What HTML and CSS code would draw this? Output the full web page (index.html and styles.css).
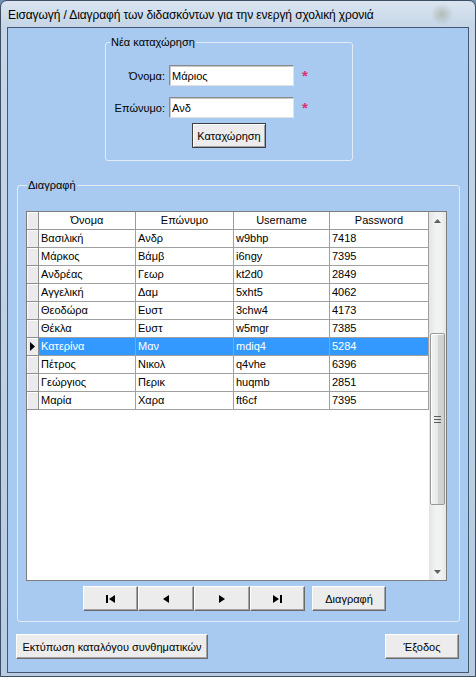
FILE: index.html
```html
<!DOCTYPE html>
<html lang="el">
<head>
    <meta charset="UTF-8">
    <title>Εισαγωγή / Διαγραφή διδασκόντων</title>
    <link rel="stylesheet" href="styles.css">
</head>
<body>
    <div class="window">
        <div class="titlebar">Εισαγωγή / Διαγραφή των διδασκόντων για την ενεργή σχολική χρονιά</div>
        <div class="client">
            <!-- νέα καταχώρηση -->
            <fieldset class="group group-new">
                <legend>Νέα καταχώρηση</legend>
                <div class="form-row">
                    <label class="form-label">Όνομα:</label>
                    <input class="field" type="text" value="Μάριος">
                    <span class="req">*</span>
                </div>
                <div class="form-row">
                    <label class="form-label">Επώνυμο:</label>
                    <input class="field" type="text" value="Ανδ">
                    <span class="req">*</span>
                </div>
                <div class="submit-row">
                    <button class="btn btn-default btn-submit">Καταχώρηση</button>
                </div>
            </fieldset>

            <!-- διαγραφή -->
            <fieldset class="group group-delete">
                <legend>Διαγραφή</legend>
                <div class="grid">
                    <div class="table">
                        <div class="row head">
                            <div class="cell rh"></div>
                            <div class="cell">Όνομα</div>
                            <div class="cell">Επώνυμο</div>
                            <div class="cell">Username</div>
                            <div class="cell">Password</div>
                        </div>
                        <div class="row"><div class="cell rh"></div><div class="cell">Βασιλική</div><div class="cell">Ανδρ</div><div class="cell">w9bhp</div><div class="cell">7418</div></div>
                        <div class="row"><div class="cell rh"></div><div class="cell">Μάρκος</div><div class="cell">Βάμβ</div><div class="cell">i6ngy</div><div class="cell">7395</div></div>
                        <div class="row"><div class="cell rh"></div><div class="cell">Ανδρέας</div><div class="cell">Γεωρ</div><div class="cell">kt2d0</div><div class="cell">2849</div></div>
                        <div class="row"><div class="cell rh"></div><div class="cell">Αγγελική</div><div class="cell">Δαμ</div><div class="cell">5xht5</div><div class="cell">4062</div></div>
                        <div class="row"><div class="cell rh"></div><div class="cell">Θεοδώρα</div><div class="cell">Ευστ</div><div class="cell">3chw4</div><div class="cell">4173</div></div>
                        <div class="row"><div class="cell rh"></div><div class="cell">Θέκλα</div><div class="cell">Ευστ</div><div class="cell">w5mgr</div><div class="cell">7385</div></div>
                        <div class="row selected">
                            <div class="cell rh">
                                <svg width="5" height="9" viewBox="0 0 5 9"><polygon points="0,0 5,4.5 0,9" fill="#000"/></svg>
                            </div>
                            <div class="cell">Κατερίνα</div><div class="cell">Μαν</div><div class="cell">mdiq4</div><div class="cell">5284</div>
                        </div>
                        <div class="row"><div class="cell rh"></div><div class="cell">Πέτρος</div><div class="cell">Νικολ</div><div class="cell">q4vhe</div><div class="cell">6396</div></div>
                        <div class="row"><div class="cell rh"></div><div class="cell">Γεώργιος</div><div class="cell">Περικ</div><div class="cell">huqmb</div><div class="cell">2851</div></div>
                        <div class="row"><div class="cell rh"></div><div class="cell">Μαρία</div><div class="cell">Χαρα</div><div class="cell">ft6cf</div><div class="cell">7395</div></div>
                    </div>
                    <div class="vscroll">
                        <div class="sb-arrow">
                            <svg width="7" height="4" viewBox="0 0 7 4"><polygon points="0,4 3.5,0 7,4" fill="#606060"/></svg>
                        </div>
                        <div class="sb-gap"></div>
                        <div class="sb-thumb">
                            <svg width="7" height="7" viewBox="0 0 7 7">
                                <rect x="0" y="0" width="7" height="1" fill="#5a5a5a"/>
                                <rect x="0" y="3" width="7" height="1" fill="#5a5a5a"/>
                                <rect x="0" y="6" width="7" height="1" fill="#5a5a5a"/>
                            </svg>
                        </div>
                        <div class="sb-rest"></div>
                        <div class="sb-arrow">
                            <svg width="7" height="4" viewBox="0 0 7 4"><polygon points="0,0 7,0 3.5,4" fill="#606060"/></svg>
                        </div>
                    </div>
                </div>
                <div class="nav">
                    <button class="btn nav-btn">
                        <svg width="9" height="8" viewBox="0 0 9 8"><rect x="0" y="0" width="2" height="8"/><polygon points="9,0 9,8 3,4"/></svg>
                    </button>
                    <button class="btn nav-btn nav-wide">
                        <svg width="6" height="8" viewBox="0 0 6 8"><polygon points="6,0 6,8 0,4"/></svg>
                    </button>
                    <button class="btn nav-btn nav-wide">
                        <svg width="6" height="8" viewBox="0 0 6 8"><polygon points="0,0 0,8 6,4"/></svg>
                    </button>
                    <button class="btn nav-btn">
                        <svg width="9" height="8" viewBox="0 0 9 8"><polygon points="0,0 0,8 6,4"/><rect x="7" y="0" width="2" height="8"/></svg>
                    </button>
                    <button class="btn btn-delete">Διαγραφή</button>
                </div>
            </fieldset>

            <div class="footer">
                <button class="btn btn-print">Εκτύπωση καταλόγου συνθηματικών</button>
                <button class="btn btn-exit">Έξοδος</button>
            </div>
        </div>
    </div>
</body>
</html>
```

FILE: styles.css
```css
/* βασικά */
body {
    margin: 0;
    font-family: "Liberation Sans", Arial, sans-serif;
    font-size: 11px;
    color: #000;
    background: #6f8fb3;
}

/* παράθυρο */
.window {
    width: 476px;
    height: 677px;
    box-sizing: border-box;
    padding: 0 6px 3px;
    display: flex;
    flex-direction: column;
    border: 1px solid #3d4e63;
    border-radius: 7px 7px 0 0;
    background:
        radial-gradient(circle at 441px 13px, rgba(110, 112, 70, 0.3), rgba(110, 112, 70, 0) 11px),
        linear-gradient(#dbe5f0, #c6d6e7 24px, #b7cbe1);
}

.titlebar {
    height: 24px;
    padding: 2px 0 0 1px;
    display: flex;
    align-items: center;
    font-size: 12px;
    letter-spacing: -0.1px;
    white-space: nowrap;
}

.client {
    flex: 1;
    background: #a9caf0;
    border: 1px solid #43576f;
}

/* group box */
.group {
    box-sizing: border-box;
    margin: 0;
    border: 1px solid #e3ebf5;
    border-radius: 3px;
    min-width: 0;
}

.group legend {
    line-height: 13px;
    padding: 0 1px;
}

.group-new {
    width: 248px;
    margin: 8px 0 0 97px;
    padding: 16px 0 12px;
}

.group-new legend {
    margin-left: 4px;
}

.form-row {
    display: flex;
    align-items: center;
    height: 21px;
}

.form-row + .form-row {
    margin-top: 11px;
}

.form-label {
    width: 59px;
    margin-right: 4px;
    text-align: right;
}

.field {
    box-sizing: border-box;
    width: 125px;
    height: 21px;
    margin: 0;
    padding: 0 0 0 2px;
    font: inherit;
    background: #fff;
    border: 1px solid;
    border-color: #8a8a8a #e2e2e2 #e2e2e2 #8a8a8a;
    box-shadow: inset 1px 1px 0 #c9c9c9;
    outline: none;
}

.req {
    margin: 0 0 0 8px;
    color: #e0306e;
    font-size: 15px;
    font-weight: bold;
    line-height: 15px;
}

.submit-row {
    margin-top: 5px;
    display: flex;
    justify-content: center;
}

/* κουμπιά */
.btn {
    box-sizing: border-box;
    height: 25px;
    margin: 0;
    padding: 0;
    font: inherit;
    color: #000;
    background: #ececec;
    border: 1px solid;
    border-color: #fff #6b6b6b #6b6b6b #fff;
    box-shadow: inset -1px -1px 0 #a3a3a3;
}

.btn-default {
    border: 1px solid #3f3f3f;
    box-shadow: inset 1px 1px 0 #fff, inset -1px -1px 0 #a3a3a3;
}

.btn-submit {
    width: 74px;
}

.group-delete {
    width: 443px;
    margin: 18px 0 0 9px;
    padding: 19px 0 10px 8px;
}

.group-delete legend {
    margin-left: 1px;
}

/* πίνακας */
.grid {
    box-sizing: border-box;
    width: 421px;
    height: 370px;
    display: flex;
    background: #fff;
    border: 1px solid #7c7c7c;
}

.table {
    flex: 1;
}

.row {
    display: grid;
    grid-template-columns: 12px 97px 98px 96px 99px;
    height: 18px;
}

.cell {
    box-sizing: border-box;
    padding-left: 2px;
    line-height: 17px;
    white-space: nowrap;
    overflow: hidden;
    border-right: 1px solid #a0a0a0;
    border-bottom: 1px solid #a0a0a0;
}

.head .cell {
    padding: 0;
    text-align: center;
    background: #fff;
    border-color: #9a9a9a;
}

.cell.rh {
    padding: 0;
    background: #ebebeb;
    border-color: #8e8e8e;
    box-shadow: inset 1px 1px 0 #fff;
    display: flex;
    align-items: center;
    justify-content: center;
}

.row.selected .cell:not(.rh) {
    background: #3399ff;
    color: #fff;
}

/* scrollbar */
.vscroll {
    width: 17px;
    display: flex;
    flex-direction: column;
    background: linear-gradient(90deg, #e4e4e4, #f2f2f2 40%, #f2f2f2 70%, #e6e6e6);
}

.sb-arrow {
    height: 17px;
    display: flex;
    align-items: center;
    justify-content: center;
}

.sb-gap {
    height: 104px;
}

.sb-thumb {
    box-sizing: border-box;
    height: 172px;
    margin: 0 1px;
    display: flex;
    align-items: center;
    justify-content: center;
    border: 1px solid #989898;
    border-radius: 2px;
    background: linear-gradient(90deg, #f4f4f4, #e8e8e8 50%, #d4d4d4 51%, #cfcfcf);
    box-shadow: inset 1px 1px 0 #fff;
}

.sb-rest {
    flex: 1;
}

/* πλοήγηση */
.nav {
    display: flex;
    margin-top: 5px;
    padding-left: 57px;
}

.nav-btn {
    width: 55px;
    display: flex;
    align-items: center;
    justify-content: center;
}

.nav-wide {
    width: 56px;
}

.btn-delete {
    width: 74px;
    margin-left: 7px;
}

/* κάτω κουμπιά */
.footer {
    display: flex;
    justify-content: space-between;
    margin-top: 12px;
    padding: 0 9px 0 8px;
}

.btn-print {
    width: 192px;
}

.btn-exit {
    width: 74px;
}
```
